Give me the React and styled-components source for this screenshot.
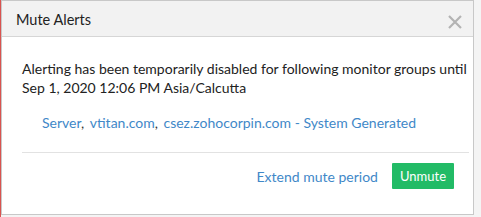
import React from 'react'
import styled, { createGlobalStyle } from 'styled-components'

const Global = createGlobalStyle`
  body {
    margin: 0;
    background: #f4f4f4;
    font-family: Lato, 'Liberation Sans', sans-serif;
  }
`

const groups = ['Server', 'vtitan.com', 'csez.zohocorpin.com - System Generated']

const App = () => {
  return (
    <Page>
      <Global />
      <Dialog>
        <Header>
          <Title>Mute Alerts</Title>
          <Close aria-label="Close">
            <svg width="14" height="14" viewBox="0 0 14 14">
              <path d="M1 1L13 13M13 1L1 13" stroke="#b3b3b3" strokeWidth="2.2" />
            </svg>
          </Close>
        </Header>
        <Body>
          <Message>
            Alerting has been temporarily disabled for following monitor groups until
            Sep 1, 2020 12:06 PM Asia/Calcutta
          </Message>
          <Groups>
            {groups.map((g, i) => (
              <React.Fragment key={g}>
                <GroupLink>{g}</GroupLink>
                {i < groups.length - 1 && <Comma>, </Comma>}
              </React.Fragment>
            ))}
          </Groups>
        </Body>
        <Footer>
          <TextButton>Extend mute period</TextButton>
          <PrimaryButton>Unmute</PrimaryButton>
        </Footer>
      </Dialog>
    </Page>
  )
}

export default App

const Page = styled.div`
  padding-left: 1px;
  height: 217px;
  box-sizing: border-box;
  background: linear-gradient(90deg, #d9534f 0 1px, transparent 1px);
`
const Dialog = styled.div`
  width: 473px;
  height: 215px;
  box-sizing: border-box;
  background: #fff;
  border: 1px solid #c8c8c8;
  display: flex;
  flex-direction: column;
`
const Header = styled.div`
  height: 36px;
  box-sizing: border-box;
  background: #f2f2f2;
  border-bottom: 1px solid #d6d6d6;
  display: flex;
  align-items: center;
  justify-content: space-between;
  padding: 0 10px 0 14px;
`
const Title = styled.h3`
  margin: 0;
  font-size: 14.5px;
  font-weight: 400;
  color: #222;
  padding-top: 2px;
`
const Close = styled.button`
  border: 0;
  background: none;
  padding: 0;
  margin-top: 7px;
  width: 16px;
  height: 16px;
  display: flex;
  align-items: center;
  justify-content: center;
`
const Body = styled.div`
  margin: 0 4px 0 20px;
  padding: 22px 0 19px;
  border-bottom: 1px solid #e2e2e2;
`
const Message = styled.p`
  margin: 0 -14px 0 0;
  font-size: 14px;
  line-height: 19px;
  color: #222;
`
const Groups = styled.div`
  margin-top: 16px;
  padding-left: 20px;
  font-size: 14px;
  line-height: 20px;
`
const GroupLink = styled.a`
  color: #3f88c8;
  cursor: pointer;
`
const Comma = styled.span`
  color: #333;
  white-space: pre;
  margin-right: 2px;
`
const Footer = styled.div`
  display: flex;
  justify-content: flex-end;
  align-items: center;
  gap: 14px;
  padding: 10px 19px 0 0;
`
const TextButton = styled.a`
  font-size: 14px;
  color: #3f88c8;
  cursor: pointer;
`
const PrimaryButton = styled.button`
  height: 26px;
  padding: 0 8px;
  border: 0;
  border-radius: 1px;
  background: #22bb66;
  color: #fff;
  font-family: Lato, 'Liberation Sans', sans-serif;
  font-size: 13px;
`
